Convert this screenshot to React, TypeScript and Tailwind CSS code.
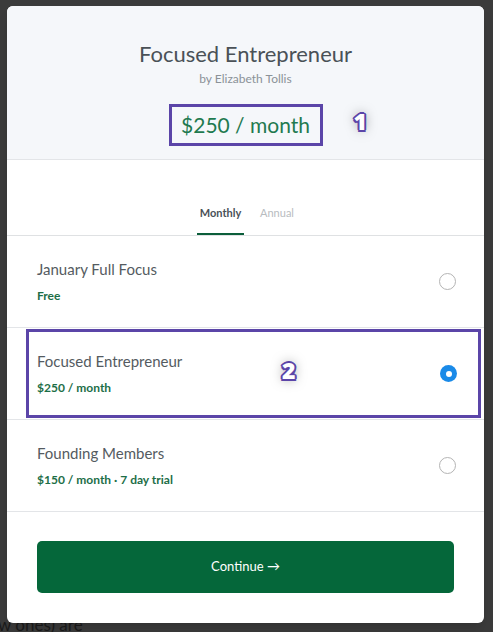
import React from 'react';

const plans = [
  { name: 'January Full Focus', price: 'Free', selected: false },
  { name: 'Focused Entrepreneur', price: '$250 / month', selected: true },
  { name: 'Founding Members', price: '$150 / month · 7 day trial', selected: false },
];

function Radio({ on }: { on: boolean }) {
  if (on) {
    return (
      <span className="flex h-[17px] w-[17px] items-center justify-center rounded-full bg-[#1a8ae8]">
        <span className="h-[6px] w-[6px] rounded-full bg-white" />
      </span>
    );
  }
  return <span className="block h-[17px] w-[17px] rounded-full border border-[#b4b4b4] bg-white" />;
}

// numbered callout: white digit, purple outline, soft dark glow
function Badge({ n }: { n: string }) {
  return (
    <span className="font-['Open_Sans',sans-serif] text-[23px] font-extrabold leading-none text-white [text-shadow:2px_0_0_#5b45a8,-2px_0_0_#5b45a8,0_2px_0_#5b45a8,0_-2px_0_#5b45a8,1.5px_1.5px_0_#5b45a8,-1.5px_-1.5px_0_#5b45a8,1.5px_-1.5px_0_#5b45a8,-1.5px_1.5px_0_#5b45a8,0_0_12px_rgba(0,0,0,0.5)]">
      {n}
    </span>
  );
}

export default function App() {
  return (
    <div className="relative h-[632px] w-[493px] overflow-hidden bg-[#3b3b3b] font-['Lato',sans-serif]">
      {/* page behind the overlay */}
      <div className="absolute left-[-2px] top-[612px] text-[17px] text-[#1a1a1a]">w ones) are</div>

      {/* modal */}
      <div className="absolute left-[7px] top-[6px] flex h-[617px] w-[477px] flex-col overflow-hidden rounded-[6px] bg-white shadow-lg">
        <div className="flex h-[154px] flex-col items-center border-b border-[#e3e5e8] bg-[#f5f7fa] pt-[34px]">
          <h1 className="text-[22px] leading-[28px] text-[#4a5157]">Focused Entrepreneur</h1>
          <p className="mt-[3px] text-[12px] leading-[16px] text-[#8b9298]">by Elizabeth Tollis</p>
          <div className="relative mt-[17px]">
            <div className="flex h-[42px] w-[154px] items-center justify-center border-[3px] border-[#5b45a8] text-[21px] text-[#1f7a50]">
              $250 / month
            </div>
            <div className="absolute left-[185px] top-[6px]">
              <Badge n="1" />
            </div>
          </div>
        </div>

        <div className="flex h-[76px] items-end justify-center gap-[16px] border-b border-[#dfe1e3]">
          <div className="flex h-[30px] w-[47px] flex-col items-center border-b-2 border-[#0b5e3a]">
            <span className="text-[11px] font-bold text-[#4a5157]">Monthly</span>
          </div>
          <div className="flex h-[30px] w-[34px] flex-col items-center">
            <span className="text-[11px] text-[#b8bcc0]">Annual</span>
          </div>
        </div>

        {plans.map((p) => (
          <div key={p.name} className="h-[92px] border-b border-[#e3e5e8] px-[19px] py-[1px]">
            <div
              className={
                p.selected
                  ? 'relative -mr-[16px] flex h-full items-center justify-between border-[3px] border-[#5b45a8] pl-[8px] pr-[21px]'
                  : 'flex h-full items-center justify-between pl-[11px] pr-[9px]'
              }
            >
              <div className="flex flex-col">
                <span className="text-[15px] leading-[20px] text-[#545b61]">{p.name}</span>
                <span className="mt-[9px] text-[12px] font-bold leading-[16px] text-[#1d6e47]">{p.price}</span>
              </div>
              {p.selected && (
                <div className="absolute left-[253px] top-[27px]">
                  <Badge n="2" />
                </div>
              )}
              <Radio on={p.selected} />
            </div>
          </div>
        ))}

        <div className="flex flex-1 items-center justify-center px-[30px] pb-[2px]">
          <button className="flex h-[52px] w-full items-center justify-center rounded-[5px] bg-[#05673a] text-[13px] text-white">
            Continue →
          </button>
        </div>
      </div>
    </div>
  );
}
